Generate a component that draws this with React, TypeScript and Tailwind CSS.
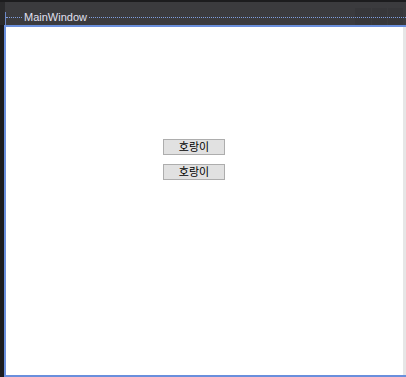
export default function App() {
  return (
    <div className="w-[406px] h-[377px] bg-[#1c1c1e] flex flex-col overflow-hidden font-['Liberation_Sans','Noto_Sans_CJK_KR',sans-serif]">
      {/* title bar */}
      <div className="h-[23px] mt-[2px] bg-[#3b3b3e] flex relative">
        <div className="w-[5px] bg-[#2a2a2c]" />
        <div className="w-[1px] mt-[10px] bg-[#6b86c4]" />
        <div className="flex-1 relative">
          <div className="absolute right-[3px] top-[6px] flex gap-[1px] bg-[#3b3b3e]">
            <div className="w-[16px] h-[17px] bg-[#37373a]" />
            <div className="w-[15px] h-[17px] bg-[#37373a]" />
            <div className="w-[15px] h-[17px] bg-[#37373a]" />
          </div>
          <div className="absolute left-0 right-0 top-[15px] border-t border-dotted border-[#7f9ee0]" />
          <span className="absolute left-[17px] top-[9px] text-[11px] leading-[13px] text-[#e0e0f0] bg-[#3b3b3e] px-[1px]">MainWindow</span>
        </div>
      </div>
      {/* client area */}
      <div className="flex-1 flex">
        <div className="w-[4px] bg-[#1c1c1e]" />
        <div className="flex-1 flex flex-col border-t-[2px] border-l-[2px] border-b-[2px] border-[#6a8fdc] bg-white">
          <div className="flex-1 flex border-r-[3px] border-[#e6e6e6]">
            <div className="flex-1 flex flex-col items-start pt-[112px] pl-[157px] gap-[9px]">
              <button className="w-[62px] h-[16px] bg-[#e1e1e1] border border-[#adadad] text-[11px] leading-[14px] text-black">호랑이</button>
              <button className="w-[62px] h-[16px] bg-[#e1e1e1] border border-[#adadad] text-[11px] leading-[14px] text-black">호랑이</button>
            </div>
          </div>
        </div>
      </div>
    </div>
  );
}
